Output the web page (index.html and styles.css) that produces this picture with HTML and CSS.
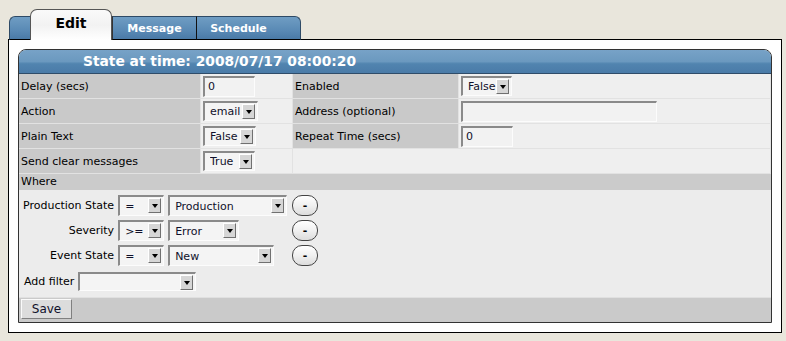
FILE: index.html
```html
<!DOCTYPE html>
<html lang="en">
<head>
  <meta charset="UTF-8" />
  <title>Edit Trigger</title>
  <link rel="stylesheet" href="styles.css">
</head>
<body>

<div class="page">
  <div class="tabs">
    <span class="tab-cap cap-left"></span>
    <a class="tab active">Edit</a>
    <a class="tab">Message</a>
    <a class="tab">Schedule</a>
    <span class="tab-cap cap-right"></span>
  </div>

  <div class="box">
    <div class="panel">
      <div class="panel-head">State at time: 2008/07/17 08:00:20</div>

      <table class="form">
        <tr>
          <td class="lbl col1">Delay (secs)</td>
          <td class="val col2"><input class="txt w52" type="text" value="0"></td>
          <td class="lbl col3">Enabled</td>
          <td class="val"><span class="sel w51"><select><option>False</option></select></span></td>
        </tr>
        <tr>
          <td class="lbl">Action</td>
          <td class="val"><span class="sel w55"><select><option>email</option></select></span></td>
          <td class="lbl">Address (optional)</td>
          <td class="val"><input class="txt w195" type="text" value=""></td>
        </tr>
        <tr>
          <td class="lbl">Plain Text</td>
          <td class="val"><span class="sel w53"><select><option>False</option></select></span></td>
          <td class="lbl">Repeat Time (secs)</td>
          <td class="val"><input class="txt w52" type="text" value="0"></td>
        </tr>
        <tr>
          <td class="lbl">Send clear messages</td>
          <td class="val"><span class="sel w52"><select><option>True</option></select></span></td>
          <td class="val" colspan="2"></td>
        </tr>
      </table>

      <div class="where">Where</div>

      <div class="filters">
        <div class="filter-grid">
          <label class="f-lbl">Production State</label>
          <span class="sel w46"><select><option>=</option></select></span>
          <span class="sel w119"><select><option>Production</option></select></span>
          <button class="minus">-</button>

          <label class="f-lbl">Severity</label>
          <span class="sel w46"><select><option>&gt;=</option></select></span>
          <span class="sel w71"><select><option>Error</option></select></span>
          <button class="minus">-</button>

          <label class="f-lbl">Event State</label>
          <span class="sel w46"><select><option>=</option></select></span>
          <span class="sel w106"><select><option>New</option></select></span>
          <button class="minus">-</button>
        </div>
        <div class="add-filter">
          <label>Add filter</label>
          <span class="sel w118 short"><select><option></option></select></span>
        </div>
      </div>

      <div class="actions">
        <button class="save">Save</button>
      </div>
    </div>
  </div>
</div>

</body>
</html>
```

FILE: styles.css
```css
body {
  margin: 0;
  background: #e9e6dc;
  font-family: "DejaVu Sans", Verdana, sans-serif;
  font-size: 11px;
  color: #000;
}

.page {
  width: 774px;
  padding: 10px 0 0 8px;
}

/* tabs */

.tabs {
  display: flex;
  align-items: flex-end;
  height: 30px;
  margin-left: 1px;
  margin-bottom: -1px;
  position: relative;
  z-index: 1;
}

.tab, .tab-cap {
  height: 22px;
  background: linear-gradient(#6f9dc3, #5a8ab5 60%, #4a7aa7);
  border-top: 1px solid #2e4a66;
  border-bottom: 1px solid #000;
}

.tab-cap {
  width: 20px;
}

.cap-left {
  border-left: 1px solid #2e4a66;
  border-radius: 6px 0 0 0;
}

.cap-right {
  border-right: 1px solid #2e4a66;
  border-radius: 0 6px 0 0;
}

.tab {
  width: 83px;
  border-left: 1px solid #111;
  color: #fff;
  font-weight: bold;
  text-align: center;
  line-height: 24px;
}

.tab.active + .tab {
  border-left: 1px solid #333;
}

.tab.active {
  width: 80px;
  height: 30px;
  background: linear-gradient(#fafafa, #f2f2f2 50%, #fff);
  border: 1px solid #555;
  border-bottom: none;
  border-radius: 7px 7px 0 0;
  color: #000;
  font-size: 14px;
  line-height: 26px;
}

/* outer box */

.box {
  border: 1px solid #000;
  background: #fff;
  padding: 9px;
}

.panel {
  border: 1px solid #333;
  border-radius: 8px 8px 0 0;
  overflow: hidden;
  background: #ececec;
}

.panel-head {
  height: 23px;
  line-height: 23px;
  padding-left: 64px;
  background: linear-gradient(#77a2c7, #6b99bf 50%, #5184af 60%, #4a7ba8);
  border-bottom: 1px solid #2f4c69;
  color: #fff;
  font-weight: bold;
  font-size: 13.8px;
}

/* form table */

.form {
  width: 100%;
  border-collapse: collapse;
}

.form td {
  height: 24px;
  padding: 0 2px;
  border-bottom: 1px solid #e2e2e2;
  border-right: 1px solid #e2e2e2;
  vertical-align: middle;
}

.lbl {
  background: #c9c9c9;
}

.val {
  background: #efefef;
}

.col1 { width: 177px; }
.col2 { width: 87px; }
.col3 { width: 161px; }

/* inputs */

.txt {
  box-sizing: border-box;
  height: 21px;
  padding: 0 3px;
  border-style: solid;
  border-width: 2px 1px 1px 2px;
  border-color: #8a8a8a #fcfcfc #fcfcfc #8a8a8a;
  background: #f2f2f2;
  font: inherit;
  color: #10102a;
}

.sel {
  display: inline-block;
  position: relative;
  vertical-align: middle;
}

.sel select {
  box-sizing: border-box;
  width: 100%;
  height: 20px;
  padding: 0 0 0 5px;
  -webkit-appearance: none;
  appearance: none;
  border-style: solid;
  border-width: 2px 1px 1px 2px;
  border-color: #8a8a8a #fcfcfc #fcfcfc #8a8a8a;
  border-radius: 0;
  background: #f4f4f4;
  font: inherit;
  color: #10102a;
}

.sel::after {
  content: "";
  position: absolute;
  right: 3px;
  top: 3px;
  width: 11px;
  height: 13px;
  background: #d6d6d6;
  border: 1px solid;
  border-color: #fff #707070 #707070 #fff;
  pointer-events: none;
}

.sel::before {
  content: "";
  position: absolute;
  right: 6px;
  top: 9px;
  border-left: 3.5px solid transparent;
  border-right: 3.5px solid transparent;
  border-top: 4px solid #000;
  z-index: 1;
  pointer-events: none;
}

.w46 { width: 46px; }
.w51 { width: 51px; }
.w52 { width: 52px; }
.w53 { width: 53px; }
.w55 { width: 55px; }
.w71 { width: 71px; }
.w106 { width: 106px; }
.w118 { width: 118px; }
.w119 { width: 119px; }
.w195 { width: 196px; }

.short select { height: 19px; }

/* where */

.where {
  height: 16px;
  line-height: 16px;
  padding-left: 2px;
  background: #cbcbcb;
}

.filters {
  padding: 5px 0 6px 4px;
  background: #ececec;
}

.filter-grid {
  display: grid;
  grid-template-columns: auto auto 119px auto;
  column-gap: 4px;
  row-gap: 4px;
  align-items: center;
  justify-items: start;
  width: max-content;
}

.filter-grid .sel select { height: 21px; }

.f-lbl {
  justify-self: end;
  white-space: nowrap;
}

.minus {
  box-sizing: border-box;
  width: 26px;
  height: 21px;
  margin-left: 1px;
  padding: 0;
  border: 1px solid #444;
  border-radius: 10px;
  background: linear-gradient(#ffffff, #f0f0f0 50%, #dcdcdc);
  font: inherit;
  font-weight: bold;
  line-height: 16px;
}

.add-filter {
  display: flex;
  align-items: center;
  gap: 4px;
  margin-top: 6px;
  padding-left: 1px;
}

/* actions */

.actions {
  padding: 1px 2px 3px;
  background: #cacaca;
  border-top: 1px solid #e0e0e0;
}

.save {
  display: block;
  width: 51px;
  height: 20px;
  padding: 0;
  border: 1px solid;
  border-color: #fafafa #808080 #808080 #fafafa;
  background: #dcdcdc;
  font: inherit;
  font-size: 12px;
  color: #10102a;
}
```
